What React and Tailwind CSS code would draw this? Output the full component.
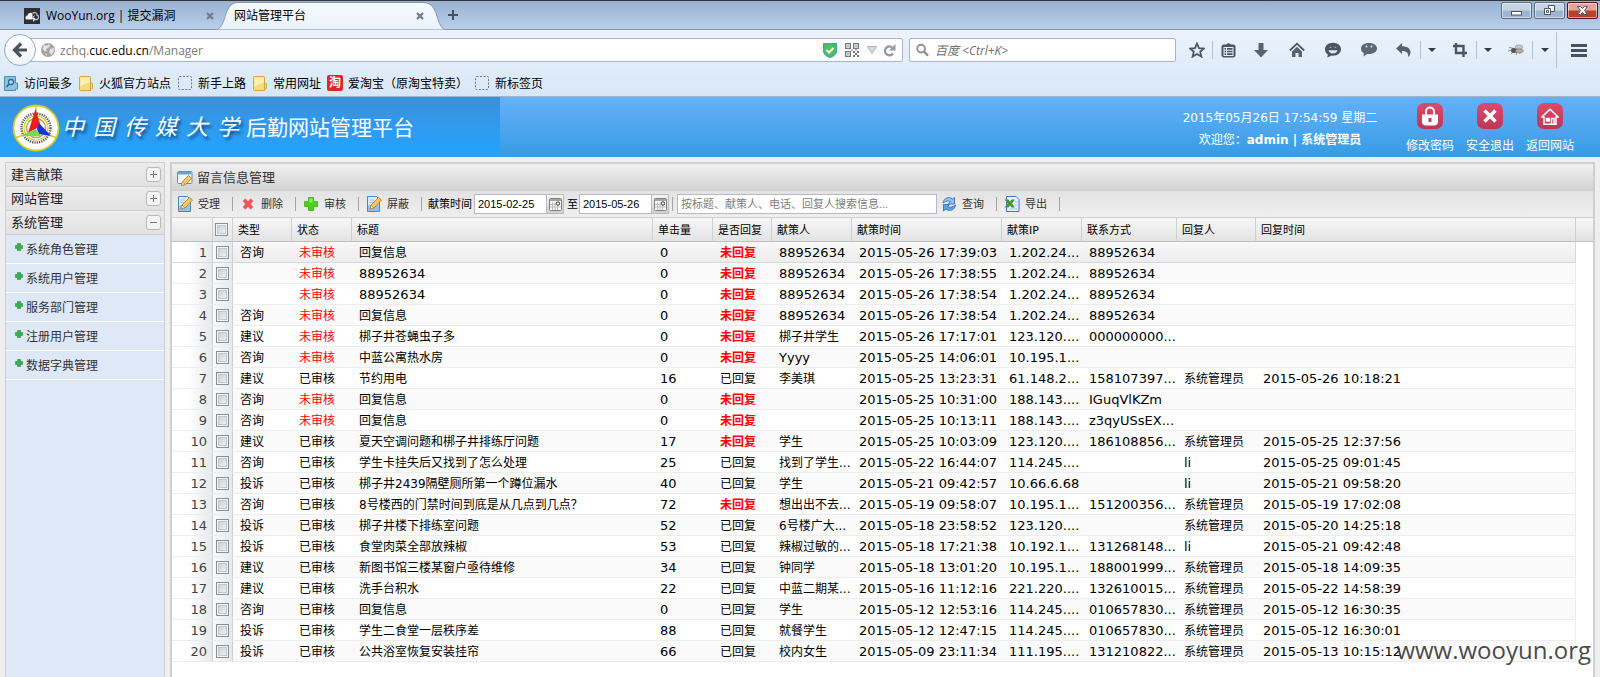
import React from "react";
import clsx from "clsx";

const MENU = ["系统角色管理", "系统用户管理", "服务部门管理", "注册用户管理", "数据字典管理"];

const COLUMNS = [
  { label: "类型", width: "w-[59px]" },
  { label: "状态", width: "w-[60px]" },
  { label: "标题", width: "" },
  { label: "单击量", width: "w-[60px]" },
  { label: "是否回复", width: "w-[59px]" },
  { label: "献策人", width: "w-[80px]" },
  { label: "献策时间", width: "w-[150px]" },
  { label: "献策IP", width: "w-[80px]" },
  { label: "联系方式", width: "w-[95px]" },
  { label: "回复人", width: "w-[79px]" },
  { label: "回复时间", width: "w-[320px]" },
];

// type, status, title, hits, replied, author, created, ip, contact, replier, replied at
const ROWS = [
  ["咨询", "未审核", "回复信息", "0", "未回复", "88952634", "2015-05-26 17:39:03", "1.202.24...", "88952634", "", ""],
  ["", "未审核", "88952634", "0", "未回复", "88952634", "2015-05-26 17:38:55", "1.202.24...", "88952634", "", ""],
  ["", "未审核", "88952634", "0", "未回复", "88952634", "2015-05-26 17:38:54", "1.202.24...", "88952634", "", ""],
  ["咨询", "未审核", "回复信息", "0", "未回复", "88952634", "2015-05-26 17:38:54", "1.202.24...", "88952634", "", ""],
  ["建议", "未审核", "梆子井苍蝇虫子多", "0", "未回复", "梆子井学生", "2015-05-26 17:17:01", "123.120....", "000000000...", "", ""],
  ["咨询", "未审核", "中蓝公寓热水房", "0", "未回复", "Yyyy", "2015-05-25 14:06:01", "10.195.1...", "", "", ""],
  ["建议", "已审核", "节约用电", "16", "已回复", "李美琪", "2015-05-25 13:23:31", "61.148.2...", "158107397...", "系统管理员", "2015-05-26 10:18:21"],
  ["咨询", "未审核", "回复信息", "0", "未回复", "", "2015-05-25 10:31:00", "188.143....", "IGuqVlKZm", "", ""],
  ["咨询", "未审核", "回复信息", "0", "未回复", "", "2015-05-25 10:13:11", "188.143....", "z3qyUSsEX...", "", ""],
  ["建议", "已审核", "夏天空调问题和梆子井排练厅问题", "17", "未回复", "学生", "2015-05-25 10:03:09", "123.120....", "186108856...", "系统管理员", "2015-05-25 12:37:56"],
  ["咨询", "已审核", "学生卡挂失后又找到了怎么处理", "25", "已回复", "找到了学生...", "2015-05-22 16:44:07", "114.245....", "", "li", "2015-05-25 09:01:45"],
  ["投诉", "已审核", "梆子井2439隔壁厕所第一个蹲位漏水", "40", "已回复", "学生", "2015-05-21 09:42:57", "10.66.6.68", "", "li", "2015-05-21 09:58:20"],
  ["咨询", "已审核", "8号楼西的门禁时间到底是从几点到几点？", "72", "未回复", "想出出不去...", "2015-05-19 09:58:07", "10.195.1...", "151200356...", "系统管理员", "2015-05-19 17:02:08"],
  ["投诉", "已审核", "梆子井楼下排练室问题", "52", "已回复", "6号楼广大...", "2015-05-18 23:58:52", "123.120....", "", "系统管理员", "2015-05-20 14:25:18"],
  ["投诉", "已审核", "食堂肉菜全部放辣椒", "53", "已回复", "辣椒过敏的...", "2015-05-18 17:21:38", "10.192.1...", "131268148...", "li", "2015-05-21 09:42:48"],
  ["建议", "已审核", "新图书馆三楼某窗户亟待维修", "34", "已回复", "钟同学", "2015-05-18 13:01:20", "10.195.1...", "188001999...", "系统管理员", "2015-05-18 14:09:35"],
  ["建议", "已审核", "洗手台积水", "22", "已回复", "中蓝二期某...", "2015-05-16 11:12:16", "221.220....", "132610015...", "系统管理员", "2015-05-22 14:58:39"],
  ["咨询", "已审核", "回复信息", "0", "已回复", "学生", "2015-05-12 12:53:16", "114.245....", "010657830...", "系统管理员", "2015-05-12 16:30:35"],
  ["投诉", "已审核", "学生二食堂一层秩序差", "88", "已回复", "就餐学生", "2015-05-12 12:47:15", "114.245....", "010657830...", "系统管理员", "2015-05-12 16:30:01"],
  ["投诉", "已审核", "公共浴室恢复安装挂帘", "66", "已回复", "校内女生", "2015-05-09 23:11:34", "111.195....", "131210822...", "系统管理员", "2015-05-13 10:15:12"],
];

const CHECKBOX =
  "block size-[13px] appearance-none border border-[#8e8f8f] bg-linear-to-br from-[#c3c8cf] to-[#f8f8f8] shadow-[inset_0_0_0_1px_#f4f4f4,inset_0_0_0_2px_#c4c8cc]";

/* ---------- browser chrome ---------- */

function TabClose() {
  return (
    <svg viewBox="0 0 8 8" className="size-2">
      <path d="M1 1l6 6M7 1l-6 6" stroke="#6d7c8e" strokeWidth="2.200" />
    </svg>
  );
}

function TabStrip() {
  return (
    <div className="flex h-[29px] border-t border-[#35353a] bg-linear-to-b from-[#98b1d0] to-[#b9d0ea] text-xs text-black">
      <div className="flex w-[214px] items-center pt-px pl-6">
        <svg viewBox="0 0 16 16" className="size-4 shrink-0">
          <rect width="16" height="16" fill="#2f2f33" />
          <path d="M2 11.5c-1.500-2 0-4 1.500-4C4 4.500 7.500 4 8.500 6v5.500z" fill="#f2f2f2" />
          <path d="M8.500 5.500c2-2 4.500-.5 4.500 1.500 2 .5 2 4 0 4.500H9" fill="none" stroke="#b9b9bd" strokeWidth="1.300" />
          <path d="M10.500 7.500l-2 3h2l-1 3" stroke="#f2f2f2" fill="none" />
        </svg>
        <span className="ml-[6px] flex-1 whitespace-nowrap">WooYun.org | 提交漏洞</span>
        <button aria-label="关闭标签页"><TabClose /></button>
      </div>
      <div className="relative flex w-[234px] items-center pt-px pr-6 pl-5">
        <svg viewBox="0 0 235 28" className="absolute top-px left-0 h-7 w-full" preserveAspectRatio="none">
          <defs>
            <linearGradient id="tab" x1="0" y1="0" x2="0" y2="1">
              <stop offset="0" stopColor="#f7fafd" />
              <stop offset="1" stopColor="#e9f1fa" />
            </linearGradient>
          </defs>
          <path d="M0 28C14 28 8 .5 24 .5H210C228 .5 221 28 235 28z" fill="url(#tab)" stroke="#7f98b5" />
        </svg>
        <span className="relative flex-1">网站管理平台</span>
        <button aria-label="关闭标签页" className="relative"><TabClose /></button>
      </div>
      <button aria-label="新建标签页">
        <svg viewBox="0 0 10 10" className="size-[10px]">
          <path d="M5 0v10M0 5h10" stroke="#46535f" strokeWidth="2" />
        </svg>
      </button>
      <div className="ml-auto flex gap-[2px] pt-px pr-[2px]">
        {["最小化", "还原", "关闭"].map((label, i) => (
          <button
            key={label}
            aria-label={label}
            className={clsx(
              "flex h-[17px] w-[31px] items-center justify-center rounded-[2px] border shadow-[inset_0_0_0_1px_#ffffff80]",
              i === 2
                ? "border-[#4a1822] bg-linear-to-b from-[#e3a597] from-45% to-[#b9412a] to-55%"
                : "border-[#5f6e85] bg-linear-to-b from-[#c6d5e6] from-45% to-[#9fb6d2] to-55%"
            )}
          >
            <svg viewBox="0 0 13 11" className="h-[11px] w-[13px]" fill="#fff" stroke="#4d5566">
              {i === 0 && <rect x="1.500" y="6.500" width="10" height="3.500" />}
              {i === 1 && (
                <>
                  <path d="M5.500.5h6v6h-6z" />
                  <path d="M1.500 3.500h6v6h-6z" />
                  <path d="M3.500 5.500h2v2h-2z" />
                </>
              )}
              {i === 2 && <path d="M1.500 1.500h3l2 2 2-2h3l-3 4 3 4h-3l-2-2-2 2h-3l3-4z" />}
            </svg>
          </button>
        ))}
      </div>
    </div>
  );
}

function Caret() {
  return (
    <svg viewBox="0 0 8 4" className="h-1 w-2">
      <path d="M0 0h8L4 4z" fill="#333d47" />
    </svg>
  );
}

function ToolIcon({ label, width, children }) {
  return (
    <button aria-label={label} className={clsx("flex shrink-0 items-center justify-center", width)}>
      {children}
    </button>
  );
}

function Sep() {
  return <span className="h-[18px] w-px shrink-0 bg-[#b4c1d0]" />;
}

function NavBar() {
  return (
    <div className="flex h-10 items-center">
      <button aria-label="后退" className="relative z-10 ml-1 flex size-8 shrink-0 items-center justify-center rounded-full border border-[#94a9bf] bg-linear-to-b from-white to-[#eef4fa]">
        <svg viewBox="0 0 16 16" className="size-4">
          <path d="M9 1.500L2.500 8 9 14.500M3 8h12" stroke="#46535f" strokeWidth="3.200" fill="none" />
        </svg>
      </button>
      <div className="-ml-2 flex h-6 min-w-0 flex-1 items-center rounded-[2px] border border-[#a6b7ca] bg-white pr-[6px] pl-3">
        <svg viewBox="0 0 14 14" className="size-[14px] shrink-0">
          <circle cx="7" cy="7" r="7" fill="#a3a3a3" />
          <path d="M3 2l3 .5L8 1l1 2-2 2-2 1 1 2-2 .5L1.500 6zM9 6l4-1v3l-2.500 4L8 9.500zM4 10l2 1-.5 2z" fill="#e2e2e2" />
        </svg>
        <div className="ml-[5px] flex-1 pt-px text-xs whitespace-nowrap text-[#7b7b7b]">
          zchq.<span className="text-black">cuc.edu.cn</span>/Manager
        </div>
        <svg viewBox="0 0 14 15" className="h-[15px] w-[14px]">
          <path d="M.7.7h12.600v7.500c0 3-3 4.800-6.300 6.300C3.700 13 .7 11.200.7 8.200z" fill="#57bf4b" stroke="#35a6c4" strokeWidth="1.400" />
          <path d="M3.500 7l2.500 2.500L10.500 5" stroke="#fff" strokeWidth="2" fill="none" />
        </svg>
        <svg viewBox="0 0 14 14" className="ml-2 size-[14px]" fill="#6e7a85">
          <path fillRule="evenodd" d="M0 0h6v6H0zM1.300 1.300v3.400h3.400V1.300zM8 0h6v6H8zM9.300 1.300v3.400h3.400V1.300zM0 8h6v6H0zM1.300 9.300v3.400h3.400V9.300z" />
          <path d="M2.300 2.300h1.400v1.400H2.300zM10.300 2.300h1.400v1.400h-1.400zM2.300 10.300h1.400v1.400H2.300zM8 8h2v2H8zM12 8h2v2h-2zM10 10h2v2h-2zM8 12h2v2H8zM12 12h2v2h-2zM6.500 6h1v2h-1zM10 6.500h2v1h-2z" />
        </svg>
        <svg viewBox="0 0 10 8" className="ml-2 h-2 w-[10px]">
          <path d="M.5.5h9L5 7.500z" fill="#d3dae2" stroke="#a9b4c0" />
        </svg>
        <button aria-label="刷新" className="ml-[6px]">
          <svg viewBox="0 0 13 13" className="size-[13px]">
            <path d="M9 3.300A4.400 4.400 0 1 0 10 9.500" fill="none" stroke="#8e9aa7" strokeWidth="2.400" />
            <path d="M12.500 0v6.500H6z" fill="#8e9aa7" />
          </svg>
        </button>
      </div>
      <label className="ml-[6px] flex h-6 w-[267px] items-center rounded-[2px] border border-[#a6b7ca] bg-white pl-[6px]">
        <svg viewBox="0 0 14 14" className="size-[14px]">
          <circle cx="5.500" cy="5.500" r="4.200" fill="none" stroke="#909090" strokeWidth="2" />
          <path d="M8.500 8.500l4.500 4.500" stroke="#909090" strokeWidth="2.500" />
        </svg>
        <input
          aria-label="搜索"
          placeholder="百度 <Ctrl+K>"
          className="ml-[6px] w-full bg-transparent pt-px text-xs italic outline-none placeholder:text-[#6f6f6f]"
        />
      </label>
      <div className="ml-[6px] flex items-center">
        <ToolIcon label="收藏" width="w-[30px]">
          <svg viewBox="0 0 16 16" className="size-4">
            <path d="M8 1.500l2 4.600 5 .4-3.800 3.200 1.200 4.900L8 12l-4.400 2.600 1.200-4.900L1 6.500l5-.4z" fill="none" stroke="#4a5762" strokeWidth="1.800" />
          </svg>
        </ToolIcon>
        <Sep />
        <ToolIcon label="书签" width="w-[30px]">
          <svg viewBox="0 0 15 15" className="size-[15px]" fill="#4a5762">
            <path fillRule="evenodd" d="M5 1.500L7.500 0 10 1.500h3l1.500 1.500v10L13 14.500H2L.5 13V3L2 1.500zM2.500 4v9h10V4z" />
            <path d="M3.500 5h1.500v1.700H3.500zM6 5h5.500v1.700H6zM3.500 7.700h1.500v1.600H3.500zM6 7.700h5.500v1.600H6zM3.500 10.300h1.500V12H3.500zM6 10.300h5.500V12H6z" />
          </svg>
        </ToolIcon>
        <ToolIcon label="下载" width="w-9">
          <svg viewBox="0 0 14 15" className="h-[15px] w-[14px]">
            <path d="M4.500 0h5v7H14l-7 7.500L0 7h4.500z" fill="#56646f" />
          </svg>
        </ToolIcon>
        <ToolIcon label="主页" width="w-9">
          <svg viewBox="0 0 16 16" className="size-4">
            <path d="M.8 8.500L8 1.700l7.200 6.800" stroke="#4a5762" strokeWidth="1.800" fill="none" />
            <path d="M3 9.500l5-4.700 5 4.700V15H9.500v-4h-3v4H3z" fill="#56646f" />
          </svg>
        </ToolIcon>
        <ToolIcon label="聊天" width="w-9">
          <svg viewBox="0 0 16 16" className="size-4">
            <path d="M8 .8c4.500 0 8 2.800 8 6.400s-3.500 6.500-8 6.500l-2-.2c-1 1-2.500 1.700-4 1.700.6-.8.9-1.800.8-2.700C1 11.300 0 9.500 0 7.200 0 3.600 3.500.8 8 .8z" fill="#4a5762" />
            <path d="M4.500 5.500a1.200 1.200 0 0 1 2.200 0M9.300 5.500a1.200 1.200 0 0 1 2.200 0M3.500 8.200h9c-.6 2.300-2.300 3.300-4.500 3.300s-4-1-4.500-3.300z" fill="#dbe7f4" />
          </svg>
        </ToolIcon>
        <ToolIcon label="消息" width="w-9">
          <svg viewBox="0 0 16 16" className="size-4">
            <path d="M8 1c4.500 0 8 2.200 8 5.500S12.500 12 8 12H6l-3.500 2.500.3-3.500C1 10 0 8.500 0 6.500 0 3.200 3.500 1 8 1z" fill="#5a6873" />
            <circle cx="5.500" cy="4.500" r="1" fill="#dbe7f4" />
            <circle cx="10.500" cy="4.500" r="1" fill="#dbe7f4" />
          </svg>
        </ToolIcon>
        <ToolIcon label="撤销" width="w-[33px]">
          <svg viewBox="0 0 15 14" className="h-[14px] w-[15px]">
            <path d="M0 5.500L6 0v3.200c5 0 8.500 2 8.500 6 0 2-1 3.800-2.500 4.800.7-3.500-1-6-6-6V11z" fill="#56646f" />
          </svg>
        </ToolIcon>
        <Sep />
        <ToolIcon label="撤销选项" width="w-[22px]"><Caret /></ToolIcon>
        <ToolIcon label="截图" width="w-[33px]">
          <svg viewBox="0 0 14 14" className="size-[14px]" fill="none" stroke="#4a5762" strokeWidth="2.400">
            <path d="M3 0v10h11M0 3h10.500v11" />
          </svg>
        </ToolIcon>
        <Sep />
        <ToolIcon label="截图选项" width="w-[22px]"><Caret /></ToolIcon>
        <ToolIcon label="调试" width="w-[33px]">
          <svg viewBox="0 0 16 12" className="h-3 w-4">
            <path d="M1 3.500l5 1M0 7l5-1M3 10l3-3M8 11l1-3M12 10l-1-3" stroke="#8c8c86" />
            <ellipse cx="6" cy="6.500" rx="3" ry="2.500" fill="#55534e" />
            <ellipse cx="11" cy="3" rx="4" ry="2" fill="#c9c8c2" stroke="#8c8c86" strokeWidth=".6" />
            <ellipse cx="11.500" cy="7" rx="4" ry="1.800" fill="#b3b2ab" stroke="#77766f" strokeWidth=".6" />
          </svg>
        </ToolIcon>
        <Sep />
        <ToolIcon label="调试选项" width="w-[23px]"><Caret /></ToolIcon>
        <span className="h-9 w-px bg-[#b4c1d0]" />
        <ToolIcon label="菜单" width="w-[43px]">
          <svg viewBox="0 0 16 13" className="h-[13px] w-4">
            <path d="M0 1.500h16M0 6.500h16M0 11.500h16" stroke="#46535f" strokeWidth="2.800" />
          </svg>
        </ToolIcon>
      </div>
    </div>
  );
}

function FolderIcon() {
  return (
    <svg viewBox="0 0 14 15" className="h-[15px] w-[14px]">
      <path d="M.5 1.500q0-1 1-1h9q1 0 1 1V7h1q1 0 1 1v4q0 1-1 1h-1v1.500h-10q-1 0-1-1z" fill="#f4dc7d" stroke="#d0a93c" />
      <path d="M11.500 7v6" fill="none" stroke="#d0a93c" />
      <path d="M1.500 1.500h9v5q-4 1-9 4z" fill="#fbf0b4" />
    </svg>
  );
}

function BlankIcon() {
  return (
    <svg viewBox="0 0 14 14" className="size-[14px]">
      <rect x=".5" y=".5" width="13" height="13" rx="1" fill="none" stroke="#6f7780" strokeDasharray="2 1.500" />
    </svg>
  );
}

const BOOKMARKS = [
  {
    label: "访问最多",
    icon: (
      <svg viewBox="0 0 14 15" className="h-[15px] w-[14px]">
        <path d="M.5.5h11V7h2v6h-2v1.500H.5z" fill="#8fc1e0" stroke="#4c8db8" />
        <circle cx="7" cy="6" r="2.500" fill="#b9dbf0" stroke="#2d6c97" strokeWidth="1.300" />
        <path d="M5 8l-2.500 3" stroke="#2d6c97" strokeWidth="1.600" />
      </svg>
    ),
  },
  { label: "火狐官方站点", icon: <FolderIcon /> },
  { label: "新手上路", icon: <BlankIcon /> },
  { label: "常用网址", icon: <FolderIcon /> },
  {
    label: "爱淘宝（原淘宝特卖）",
    icon: <span className="-mx-px flex size-4 items-center justify-center rounded-[2px] bg-[#dd2727] text-xs leading-4 font-bold text-white">淘</span>,
  },
  { label: "新标签页", icon: <BlankIcon /> },
];

function Bookmarks() {
  return (
    <nav className="flex h-[26px] items-center gap-[7px] pl-1 text-xs">
      {BOOKMARKS.map((b) => (
        <a key={b.label} href="#" className="flex items-center gap-[6px] whitespace-nowrap">
          {b.icon}
          <span className="pt-[2px]">{b.label}</span>
        </a>
      ))}
    </nav>
  );
}

/* ---------- site header ---------- */

function Emblem() {
  return (
    <svg viewBox="0 0 48 48" className="size-12 shrink-0">
      <circle cx="24" cy="24" r="22.500" fill="#fff" stroke="#d4cb2a" strokeWidth="1.800" />
      <circle cx="24" cy="24" r="14.500" fill="none" stroke="#55534a" strokeWidth="2.500" strokeDasharray="1.200 1.100" />
      <circle cx="24" cy="24" r="12" fill="#fff" stroke="#d4cb2a" strokeWidth="1.200" />
      <circle cx="24" cy="24" r="9.500" fill="none" stroke="#b9a94a" strokeWidth="1.500" />
      <path d="M24 2v12M4 33.500l12-4M44 33.500l-12-4" stroke="#d4cb2a" strokeWidth="1.500" />
      <path d="M23.500 5L29 23l-4 1-9 5z" fill="#f01c1c" />
      <path d="M27 19l12 13-12-2-2-5z" fill="#1631e0" />
      <path d="M17 28l7-3 5 7H9z" fill="#74dc4c" />
    </svg>
  );
}

function HeaderAction({ label, children }) {
  return (
    <a href="#" className="flex w-[60px] flex-col items-center">
      <span className="flex size-[26px] items-center justify-center rounded-[7px] bg-linear-to-b from-[#dc4a6b] to-[#bf3557]">
        {children}
      </span>
      <span className="mt-2 text-xs leading-[18px]">{label}</span>
    </a>
  );
}

function SiteHeader() {
  return (
    <header className="flex h-[60px] shrink-0 items-start bg-linear-to-b from-[#64b1fa] to-[#359ce3] text-white">
      <div className="flex h-[57px] w-[500px] items-center bg-linear-to-b from-[#3990da] to-[#22a3ff] pt-1 pl-3">
        <Emblem />
        <div className="ml-[2px] flex gap-[9px] text-[22px] leading-8 italic [text-shadow:2px_3px_3px_#0b4f8c]">
          {[..."中国传媒大学"].map((ch) => <span key={ch}>{ch}</span>)}
        </div>
        <h1 className="ml-[7px] text-[21px] leading-8">后勤网站管理平台</h1>
      </div>
      <div className="mr-4 ml-auto w-[208px] pt-[10px] text-center text-xs leading-[22px] whitespace-nowrap">
        <div>2015年05月26日 17:54:59 星期二</div>
        <div>欢迎您：<b>admin | 系统管理员</b></div>
      </div>
      <div className="flex pt-[6px] pr-5">
        <HeaderAction label="修改密码">
          <svg viewBox="0 0 18 20" className="h-5 w-[18px]">
            <path d="M5 9V5.500a4 4 0 0 1 8 0V9" fill="none" stroke="#fff" strokeWidth="2" />
            <path fillRule="evenodd" d="M1 8.500h16v7a4 4 0 0 1-4 4H5a4 4 0 0 1-4-4zM7.500 12v4h3v-4z" fill="#fff" />
          </svg>
        </HeaderAction>
        <HeaderAction label="安全退出">
          <svg viewBox="0 0 14 14" className="size-[14px]">
            <path d="M1.500 1.500l11 11M12.500 1.500l-11 11" stroke="#fff" strokeWidth="3.400" />
          </svg>
        </HeaderAction>
        <HeaderAction label="返回网站">
          <svg viewBox="0 0 18 17" className="h-[17px] w-[18px]" fill="none" stroke="#fff" strokeWidth="1.500">
            <path d="M.8 9L9 1.200 17.200 9H15v7.200H3V9z" />
            <path d="M10.500 16v-5.500h2.500V16" />
            <path d="M5.500 10.500h2.800V13H5.500z" fill="#fff" />
          </svg>
        </HeaderAction>
      </div>
    </header>
  );
}

/* ---------- sidebar ---------- */

function SidebarHeading({ title, open }) {
  return (
    <div className="flex h-6 items-center justify-between border-b border-[#cfcfcf] bg-linear-to-b from-[#ececec] to-[#e2e2e2] pr-[3px] pl-[5px] text-[13px] text-[#222]">
      {title}
      <button aria-label={open ? "收起" : "展开"} className="flex size-[15px] items-center justify-center rounded-[3px] border border-[#b9b9b9] bg-[#f4f4f4]">
        <svg viewBox="0 0 7 7" className="size-[7px]">
          <path d={open ? "M0 3.500h7" : "M0 3.500h7M3.500 0v7"} stroke="#777" />
        </svg>
      </button>
    </div>
  );
}

function Sidebar() {
  return (
    <aside className="w-40 shrink-0 border border-b-0 border-[#cfcfcf] bg-[#dfe8f6]">
      <SidebarHeading title="建言献策" />
      <SidebarHeading title="网站管理" />
      <SidebarHeading title="系统管理" open />
      {MENU.map((item) => (
        <a key={item} href="#" className="flex h-[29px] items-center gap-[3px] border-b border-white pl-[9px] text-xs text-[#333]">
          <svg viewBox="0 0 8 8" className="mb-[5px] size-2">
            <path d="M2.500.5h3v2h2v3h-2v2h-3v-2h-2v-3h2z" fill="#35b34a" stroke="#24893a" strokeWidth=".6" />
          </svg>
          <span className="pt-px">{item}</span>
        </a>
      ))}
    </aside>
  );
}

/* ---------- grid panel ---------- */

function EditIcon() {
  return (
    <svg viewBox="0 0 16 16" className="size-4">
      <path d="M1.500.5h9l3 3v12h-12z" fill="#d9edff" stroke="#4a86c8" />
      <path d="M2 9.500l11-1V15H2z" fill="#8cc4f5" />
      <path d="M3.500 4h5M3.500 6.500h4" stroke="#9cc4ea" />
      <path d="M4 13l1-4 7.500-7.500L15.500 4 8 12z" fill="#fbc65a" stroke="#a9762a" strokeWidth=".8" />
      <path d="M4 13l1-4 3 3z" fill="#f6e3c2" stroke="#a9762a" strokeWidth=".6" />
    </svg>
  );
}

function FormIcon() {
  return (
    <svg viewBox="0 0 16 16" className="size-4">
      <rect x=".5" y="1.500" width="14.500" height="12" rx="1" fill="#f4f9ff" stroke="#5f8fc9" />
      <path d="M1 2h13.500v2.500H1z" fill="#6ea0dc" />
      <path d="M4.500 15.500l1-4 6-6 3.300 3-6.300 6z" fill="#fbc65a" stroke="#a9762a" strokeWidth=".8" />
      <path d="M4.500 15.500l1-4 3 3z" fill="#f6e3c2" stroke="#a9762a" strokeWidth=".6" />
    </svg>
  );
}

function DeleteIcon() {
  return (
    <svg viewBox="0 0 16 16" className="size-4">
      <path d="M3 5l2.200-2.300L8 5.500l2.800-2.800L13 5l-2.500 3 2.500 3-2.200 2.300L8 10.500l-2.800 2.800L3 11l2.500-3z" fill="#f0524f" stroke="#e06a6a" strokeWidth=".6" />
    </svg>
  );
}

function AddIcon() {
  return (
    <svg viewBox="0 0 16 16" className="size-4">
      <path d="M5.500 1.500h5v4h4v5h-4v4h-5v-4h-4v-5h4z" fill="#4fd018" stroke="#52b52c" />
      <path d="M6.500 2.500h3v4h-3z" fill="#8ff05a" />
    </svg>
  );
}

function RefreshIcon() {
  return (
    <svg viewBox="0 0 16 16" className="size-4">
      <path d="M2 7C2.500 3 6 1 9.500 1.800l2 1.200L13.500 1.500V8H7.500l2-2.300C7.500 4.500 5 4.800 2 7z" fill="#8cc6f7" stroke="#2c74c9" strokeWidth=".9" />
      <path d="M14.500 9c-.5 4-4 6-7.500 5.200l-2-1.200-2.500 2V8.500h6L6.500 10.500c2 1.200 5 .8 8-1.500z" fill="#5aa4ec" stroke="#2c74c9" strokeWidth=".9" />
    </svg>
  );
}

function ExcelIcon() {
  return (
    <svg viewBox="0 0 16 16" className="size-4">
      <path d="M2.500.5h9.500l3 3v12H2.500z" fill="#e6f1fd" stroke="#3b78c4" />
      <path d="M10.500 6h3M10.500 9h3M5 13h8" stroke="#a9c6e8" />
      <path d="M.5 3.500h4L6 5.500l1.500-2H11L8 7.500l3 4H7.500L6 9.500l-1.500 2h-4l3.200-4z" fill="#47943a" />
    </svg>
  );
}

function ToolButton({ icon, children }) {
  return (
    <>
      <button className="flex h-[22px] items-center gap-[5px] pr-3 pl-[7px] text-[#333] first:pl-[5px]">
        {icon}
        {children}
      </button>
      <span className="h-[14px] w-px bg-[#a8a59c]" />
    </>
  );
}

function DateField({ id, label, value }) {
  return (
    <span className="flex h-5">
      <input
        id={id}
        aria-label={label}
        defaultValue={value}
        className="w-[73px] border border-[#b5b8c8] bg-white px-[3px] text-[11px] outline-none"
      />
      <button aria-label={`选择${label}`} className="flex w-[17px] items-center justify-center border border-l-0 border-[#bcbcbc] bg-linear-to-b from-[#f5f5f5] to-[#cfcfcf]">
        <svg viewBox="0 0 13 13" className="size-[13px]">
          <rect x=".5" y=".5" width="12" height="12" rx="1" fill="#fafafa" stroke="#808080" />
          <path d="M1 2h11" stroke="#a5a5a5" strokeWidth="2" />
          <path d="M3.500 4v8M6 4v8M8.500 7v5M1 6.500h6M1 9h11" stroke="#bdbdbd" />
          <circle cx="9" cy="5.500" r="1.700" fill="#fff" stroke="#333" />
        </svg>
      </button>
    </span>
  );
}

function Toolbar() {
  return (
    <div className="flex h-[27px] items-center border-b border-[#cfcfcf] bg-linear-to-b from-[#e3e3e3] to-[#efefef] text-[11px] whitespace-nowrap">
      <ToolButton icon={<EditIcon />}>受理</ToolButton>
      <ToolButton icon={<DeleteIcon />}>删除</ToolButton>
      <ToolButton icon={<AddIcon />}>审核</ToolButton>
      <ToolButton icon={<EditIcon />}>屏蔽</ToolButton>
      <label htmlFor="from" className="mr-[2px] ml-[6px]">献策时间</label>
      <DateField id="from" label="开始时间" value="2015-02-25" />
      <label htmlFor="to" className="mr-px ml-[3px]">至</label>
      <DateField id="to" label="结束时间" value="2015-05-26" />
      <span className="mr-1 ml-[3px] h-[14px] w-px bg-[#a8a59c]" />
      <input
        aria-label="搜索信息"
        placeholder="按标题、献策人、电话、回复人搜索信息..."
        className="h-5 w-[260px] border border-[#b5b8c8] bg-white px-[3px] outline-none placeholder:text-[#808080]"
      />
      <span className="-ml-px flex items-center">
        <ToolButton icon={<RefreshIcon />}>查询</ToolButton>
        <ToolButton icon={<ExcelIcon />}>导出</ToolButton>
      </span>
    </div>
  );
}

function cellClass(value, col) {
  const pending = value === "未审核" || value === "未回复";
  return clsx(
    "overflow-hidden p-0 pt-[2px] pl-[7px]",
    // plain latin values are set a little larger than the Chinese ones
    /^[\x00-\x7f]+$/.test(value) ? "text-[13px]" : "text-xs",
    pending ? "text-[#f00]" : "text-black",
    pending && col === 4 && "font-bold"
  );
}

function MessageGrid() {
  return (
    <div className="flex">
      <table className="w-full flex-1 table-fixed border-separate border-spacing-0 whitespace-nowrap">
        <colgroup>
          <col className="w-[41px]" />
          <col className="w-5" />
          {COLUMNS.map((c) => <col key={c.label} className={c.width} />)}
        </colgroup>
        <thead>
          <tr className="h-6 bg-linear-to-b from-[#f7f7f7] to-[#e2e2e2] text-left text-[11px]">
            <th className="border-r border-b border-r-[#d0d0d0] border-b-[#c0c0c0] p-0" />
            <th className="border-r border-b border-r-[#d0d0d0] border-b-[#c0c0c0] p-0 pl-[2px]">
              <input type="checkbox" aria-label="全选" className={CHECKBOX} />
            </th>
            {COLUMNS.map((c) => (
              <th key={c.label} className="border-r border-b border-r-[#d0d0d0] border-b-[#c0c0c0] p-0 pt-[3px] pl-[5px] font-normal">
                {c.label}
              </th>
            ))}
          </tr>
        </thead>
        <tbody className="leading-[18px]">
          {ROWS.map((row, i) => (
            <tr
              key={i}
              className={clsx(
                "h-[21px] *:border-b *:last:border-r",
                i === 0 && "bg-linear-to-b from-[#f8f8f8] to-[#ececec] *:border-[#d9d9d9]",
                i > 0 && "*:border-[#ededed]",
                i > 0 && i % 2 === 1 && "bg-[#fafafa]"
              )}
            >
              <td className="border-r border-r-[#d0d0d0]! bg-linear-to-r from-white from-40% to-[#e6e9ec] p-0 pt-[2px] pr-[5px] text-right text-[13px] text-[#444]">
                {i + 1}
              </td>
              <td className="border-r border-r-[#d0d0d0]! bg-linear-to-r from-[#fafafa] to-[#e6e9ec] p-0 pl-[3px]">
                <input type="checkbox" aria-label={`选择第${i + 1}行`} className={CHECKBOX} />
              </td>
              {row.map((value, col) => (
                <td key={col} className={cellClass(value, col)}>{value}</td>
              ))}
            </tr>
          ))}
        </tbody>
      </table>
      <div className="h-6 w-[17px] border-b border-[#c0c0c0] bg-linear-to-b from-[#f7f7f7] to-[#e2e2e2]" />
    </div>
  );
}

export default function App() {
  return (
    <div className="relative flex h-screen flex-col overflow-hidden bg-[#efefef] font-['DejaVu_Sans','Noto_Sans_CJK_SC',sans-serif] text-black">
      <div className="shrink-0 font-['Open_Sans','Noto_Sans_CJK_SC',sans-serif]">
        <TabStrip />
        <div className="border-t border-b border-t-[#7f98b5] border-b-[#9fb4cc] bg-linear-to-b from-[#ebf2fb] to-[#d8e7f8]">
          <NavBar />
          <Bookmarks />
        </div>
      </div>
      <SiteHeader />
      <div className="flex min-h-0 flex-1 gap-[5px] px-[5px] pt-[5px]">
        <Sidebar />
        <main className="min-w-0 flex-1 overflow-hidden border-2 border-b-0 border-[#cfcfcf] bg-white font-['Liberation_Sans','Noto_Sans_CJK_SC',sans-serif]">
          <h2 className="flex h-[27px] items-center gap-1 border-b border-[#cfcfcf] bg-linear-to-b from-[#f1f1f1] to-[#d3d3d3] pt-[2px] pl-[5px] text-[13px] text-[#333]">
            <FormIcon />
            留言信息管理
          </h2>
          <Toolbar />
          <div className="font-['DejaVu_Sans','Noto_Sans_CJK_SC',sans-serif]">
            <MessageGrid />
          </div>
        </main>
      </div>
      <div className="absolute right-[9px] bottom-[11px] font-['Open_Sans',sans-serif] text-[24px] leading-8 text-[#333]/90">
        www.wooyun.org
      </div>
    </div>
  );
}
